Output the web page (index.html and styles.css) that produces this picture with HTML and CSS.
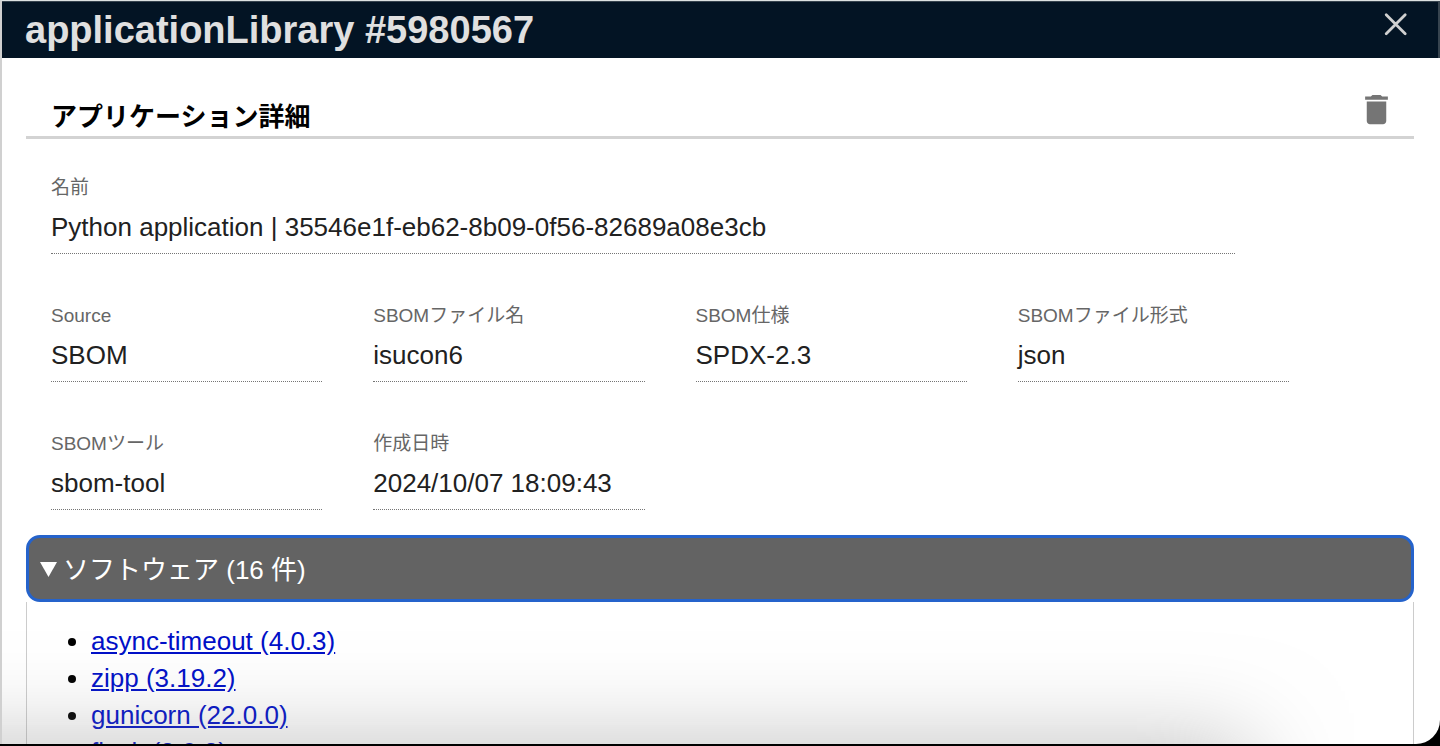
FILE: index.html
```
<!doctype html>
<html lang="ja">
  <head>
    <meta charset="UTF-8">
    <meta name="viewport" content="width=device-width, initial-scale=1.0">

    <title>applicationLibrary #5980567</title>

    <link rel="stylesheet" href="styles.css">
  </head>
  <body>

    <main class="panel">
      <header class="panel-header">
        <h1>applicationLibrary #5980567</h1>
        <button type="button" class="icon-btn close-btn" aria-label="閉じる">
          <svg width="24" height="24" viewBox="0 0 24 24" aria-hidden="true">
            <path d="M2.2 2.7L21.2 21.7M21.2 2.7L2.2 21.7" fill="none" stroke="currentColor" stroke-width="2.8" stroke-linecap="round"/>
          </svg>
        </button>
      </header>

      <div class="panel-body">
        <div class="section-head">
          <h2>アプリケーション詳細</h2>
          <button type="button" class="icon-btn delete-btn" aria-label="削除">
            <svg width="39" height="39" viewBox="0 0 24 24" aria-hidden="true">
              <path d="M6 19c0 1.1.9 2 2 2h8c1.1 0 2-.9 2-2V7H6v12zM19 4h-3.5l-1-1h-5l-1 1H5v2h14V4z" fill="currentColor"/>
            </svg>
          </button>
        </div>

        <dl class="fields">
          <div class="field field-wide">
            <dt>名前</dt>
            <dd>Python application | 35546e1f-eb62-8b09-0f56-82689a08e3cb</dd>
          </div>
          <div class="field">
            <dt>Source</dt>
            <dd>SBOM</dd>
          </div>
          <div class="field">
            <dt>SBOMファイル名</dt>
            <dd>isucon6</dd>
          </div>
          <div class="field">
            <dt>SBOM仕様</dt>
            <dd>SPDX-2.3</dd>
          </div>
          <div class="field">
            <dt>SBOMファイル形式</dt>
            <dd>json</dd>
          </div>
          <div class="field">
            <dt>SBOMツール</dt>
            <dd>sbom-tool</dd>
          </div>
          <div class="field">
            <dt>作成日時</dt>
            <dd>2024/10/07 18:09:43</dd>
          </div>
        </dl>

        <details class="software" open>
          <summary>ソフトウェア (16 件)</summary>
          <ul class="software-list">
            <li><a href="#async-timeout">async-timeout (4.0.3)</a></li>
            <li><a href="#zipp">zipp (3.19.2)</a></li>
            <li><a href="#gunicorn">gunicorn (22.0.0)</a></li>
            <li><a href="#flask">flask (3.0.3)</a></li>
          </ul>
        </details>
      </div>

      <div class="bottom-shade"></div>
    </main>

  </body>
</html>
```
FILE: styles.css
```
* {
  box-sizing: border-box;
}

body {
  margin: 0;
  background: #000;
  color: #000;
  font-family: "Liberation Sans", "Noto Sans CJK JP", sans-serif;
  font-size: 26px;
}

.panel {
  position: relative;
  height: calc(100vh - 2px);
  overflow: hidden;
  background: #fff;
  border-top: 1px solid #dde2e2;
  border-left: 2px solid #d0d0d0;
  border-bottom-right-radius: 24px;
}

.icon-btn {
  display: flex;
  padding: 0;
  border: 0;
  background: none;
  cursor: pointer;
}

/* header */
.panel-header {
  display: flex;
  justify-content: space-between;
  align-items: flex-start;
  height: 57px;
  margin-left: -2px;
  padding: 0 30px 0 23px;
  background: #031424;
  border: 2px solid #37444f;
  border-width: 1px 2px 0;
  color: #e0e0e0;
}

.panel-header h1 {
  margin: 0;
  font-size: 38px;
  line-height: 56px;
}

.close-btn {
  margin-top: 10px;
  color: #d0d0d0;
}

/* body */
.panel-body {
  padding: 32px 26px 0 24px;
}

.section-head {
  display: flex;
  justify-content: space-between;
  align-items: flex-start;
  height: 49px;
  padding: 0 18px 0 25px;
  border-bottom: 3px solid #d3d3d3;
}

.section-head h2 {
  margin: 0;
  font-size: 26px;
  line-height: 54px;
}

.delete-btn {
  color: #757575;
}

/* fields */
.fields {
  display: grid;
  grid-template-columns: repeat(4, 1fr);
  gap: 50px 51px;
  margin: 37px 125px 25px 25px;
}

.field {
  height: 78px;
  border-bottom: 1px dotted #757575;
}

.field-wide {
  grid-column: 1 / -1;
  margin-right: 54px;
}

.field dt {
  color: #666;
  font-size: 19px;
  line-height: 24px;
}

.field dd {
  margin: 8px 0 0;
  color: #212121;
  line-height: 38px;
}

/* software */
.software summary {
  display: flex;
  align-items: center;
  gap: 6px;
  height: 67px;
  padding: 0 11px 3px;
  background: #636363;
  border: 3px solid #2563cb;
  border-radius: 14px;
  color: #fff;
  list-style: none;
}

.software summary::-webkit-details-marker {
  display: none;
}

.software summary::before {
  content: "";
  width: 17px;
  height: 15px;
  margin-top: 5px;
  background: #fff;
  clip-path: polygon(0 0, 100% 0, 50% 100%);
}

.software-list {
  margin: 0;
  padding: 21px 0 21px 64px;
  border: 1px solid #ccc;
  border-top: 0;
  line-height: 37px;
}

.software-list a {
  color: #0010c8;
}

/* soft shadow along the bottom edge */
.bottom-shade {
  position: absolute;
  right: 190px;
  bottom: -200px;
  left: -200px;
  height: 200px;
  box-shadow: 0 0 95px rgba(130, 130, 130, .5);
  pointer-events: none;
}
```
